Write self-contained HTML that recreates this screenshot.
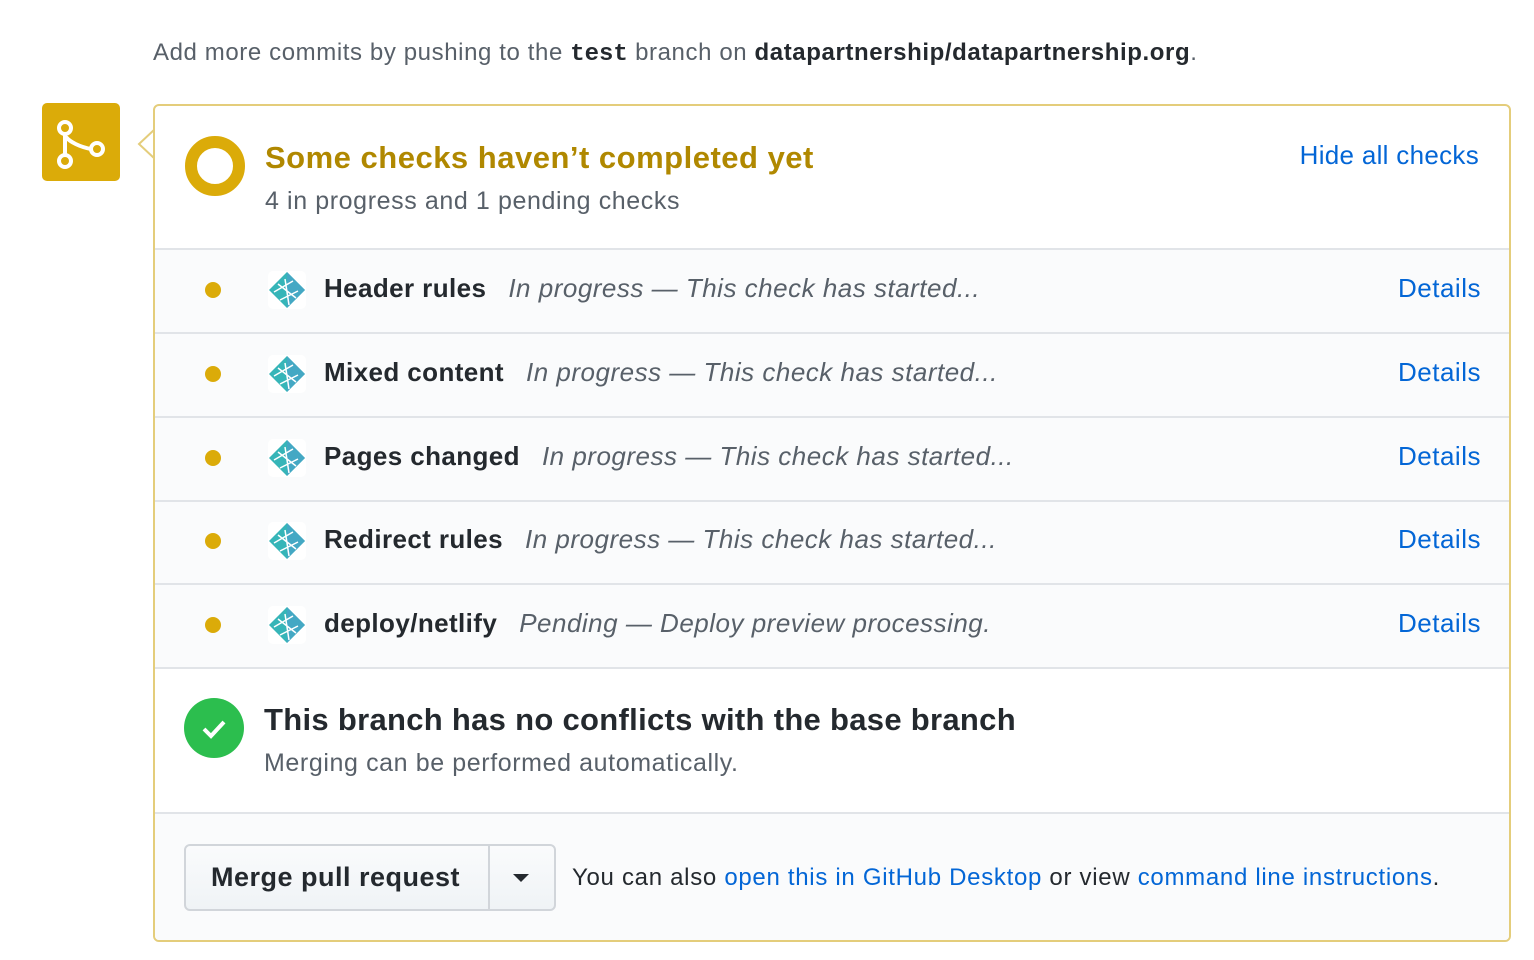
<!DOCTYPE html>
<html><head><meta charset="utf-8"><style>
*{margin:0;padding:0;box-sizing:border-box}
body{width:1534px;height:960px;background:#fff;font-family:"Liberation Sans",sans-serif;position:relative;overflow:hidden;color:#24292e}
.a{position:absolute;white-space:nowrap}
.box{position:absolute;left:153px;top:104px;width:1358px;height:838px;border:2px solid #e4cd7b;border-radius:6px;overflow:hidden;background:#fff}
.row{position:absolute;left:0;width:100%;background:#fafbfc;border-top:2px solid #e1e4e8}
.dot{position:absolute;left:52px;width:16px;height:16px;border-radius:50%;background:#dbab09}
.nl{position:absolute;left:114px}
.nm{position:absolute;left:171px;font-size:26px;font-weight:bold;color:#24292e;letter-spacing:0.4px}
.st{font-weight:normal;font-style:italic;color:#586069;margin-left:22px;letter-spacing:0.5px}
.det{position:absolute;right:30px;font-size:26px;color:#0366d6;letter-spacing:0.5px}
a{color:#0366d6;text-decoration:none}
</style></head><body>
<div class="a" style="left:153px;top:39px;font-size:24px;color:#586069;letter-spacing:0.6px">Add more commits by pushing to the <b style="font-family:'Liberation Mono',monospace;color:#24292e;letter-spacing:0">test</b> branch on <b style="color:#24292e">datapartnership/datapartnership.org</b>.</div>
<div class="a" style="left:42px;top:103px;width:78px;height:78px;background:#dbab09;border-radius:5px">
<svg width="78" height="78" viewBox="0 0 78 78"><g fill="none" stroke="#fff" stroke-width="4"><circle cx="23" cy="25" r="6"/><circle cx="23" cy="58" r="6"/><circle cx="55" cy="46" r="6"/><path d="M23 31v21M24 34c4 5 14 10 25 12"/></g></svg></div>
<svg class="a" style="left:136px;top:128px" width="20" height="32"><path d="M19 1L3 16L19 31" fill="#fff" stroke="#e4cd7b" stroke-width="2"/></svg>
<div class="box">
 <div class="a" style="left:30px;top:30px;width:60px;height:60px;border-radius:50%;border:12px solid #dbab09"></div>
 <div class="a" style="left:110px;top:34px;font-size:31px;font-weight:bold;color:#b08800;letter-spacing:0.5px">Some checks haven’t completed yet</div>
 <div class="a" style="left:110px;top:81px;font-size:25px;color:#586069;letter-spacing:0.6px">4 in progress and 1 pending checks</div>
 <div class="a" style="right:30px;top:34px;font-size:26px;color:#0366d6;letter-spacing:0.3px">Hide all checks</div>
 <div class="row" style="top:142px;height:86px"></div>
 <div class="row" style="top:226px;height:86px"></div>
 <div class="row" style="top:310px;height:86px"></div>
 <div class="row" style="top:394px;height:86px"></div>
 <div class="row" style="top:477px;height:86px"></div>
 <div class="row" style="top:561px;height:147px;background:#fff"></div>
 <div class="row" style="top:706px;height:140px"></div>
</div>
<div style="position:absolute;left:153px;top:104px;width:1358px">
 <div style="position:absolute;top:144px;width:100%;height:84px">
  <div class="dot" style="top:34px"></div><svg class="nl" style="top:22px" width="40" height="40" viewBox="0 0 40 40"><rect x="1" y="1" width="38" height="38" rx="5" fill="#fff"/><path d="M20 2L38 20L20 38L2 20Z" fill="#36b5b8"/><path d="M20 2L38 20L20 38Z" fill="#4aa3c9" opacity=".7"/><path d="M7 22L26 11M13 30L31 21M18 9L22 35M11 14L29 28" stroke="#fff" stroke-width="1.5"/></svg>
  <div class="nm" style="top:25px">Header rules<span class="st">In progress — This check has started...</span></div><div class="det" style="top:25px">Details</div></div>
 <div style="position:absolute;top:228px;width:100%;height:84px">
  <div class="dot" style="top:34px"></div><svg class="nl" style="top:22px" width="40" height="40" viewBox="0 0 40 40"><rect x="1" y="1" width="38" height="38" rx="5" fill="#fff"/><path d="M20 2L38 20L20 38L2 20Z" fill="#36b5b8"/><path d="M20 2L38 20L20 38Z" fill="#4aa3c9" opacity=".7"/><path d="M7 22L26 11M13 30L31 21M18 9L22 35M11 14L29 28" stroke="#fff" stroke-width="1.5"/></svg>
  <div class="nm" style="top:25px">Mixed content<span class="st">In progress — This check has started...</span></div><div class="det" style="top:25px">Details</div></div>
 <div style="position:absolute;top:312px;width:100%;height:84px">
  <div class="dot" style="top:34px"></div><svg class="nl" style="top:22px" width="40" height="40" viewBox="0 0 40 40"><rect x="1" y="1" width="38" height="38" rx="5" fill="#fff"/><path d="M20 2L38 20L20 38L2 20Z" fill="#36b5b8"/><path d="M20 2L38 20L20 38Z" fill="#4aa3c9" opacity=".7"/><path d="M7 22L26 11M13 30L31 21M18 9L22 35M11 14L29 28" stroke="#fff" stroke-width="1.5"/></svg>
  <div class="nm" style="top:25px">Pages changed<span class="st">In progress — This check has started...</span></div><div class="det" style="top:25px">Details</div></div>
 <div style="position:absolute;top:395px;width:100%;height:84px">
  <div class="dot" style="top:34px"></div><svg class="nl" style="top:22px" width="40" height="40" viewBox="0 0 40 40"><rect x="1" y="1" width="38" height="38" rx="5" fill="#fff"/><path d="M20 2L38 20L20 38L2 20Z" fill="#36b5b8"/><path d="M20 2L38 20L20 38Z" fill="#4aa3c9" opacity=".7"/><path d="M7 22L26 11M13 30L31 21M18 9L22 35M11 14L29 28" stroke="#fff" stroke-width="1.5"/></svg>
  <div class="nm" style="top:25px">Redirect rules<span class="st">In progress — This check has started...</span></div><div class="det" style="top:25px">Details</div></div>
 <div style="position:absolute;top:479px;width:100%;height:84px">
  <div class="dot" style="top:34px"></div><svg class="nl" style="top:22px" width="40" height="40" viewBox="0 0 40 40"><rect x="1" y="1" width="38" height="38" rx="5" fill="#fff"/><path d="M20 2L38 20L20 38L2 20Z" fill="#36b5b8"/><path d="M20 2L38 20L20 38Z" fill="#4aa3c9" opacity=".7"/><path d="M7 22L26 11M13 30L31 21M18 9L22 35M11 14L29 28" stroke="#fff" stroke-width="1.5"/></svg>
  <div class="nm" style="top:25px">deploy/netlify<span class="st">Pending — Deploy preview processing.</span></div><div class="det" style="top:25px">Details</div></div>
 <div class="a" style="left:31px;top:594px;width:60px;height:60px;border-radius:50%;background:#2cbe4e"><svg width="60" height="60"><path d="M20 31l7 7l13-14" fill="none" stroke="#fff" stroke-width="4"/></svg></div>
 <div class="a" style="left:111px;top:598px;font-size:31px;font-weight:bold;letter-spacing:0.3px">This branch has no conflicts with the base branch</div>
 <div class="a" style="left:111px;top:645px;font-size:25px;color:#586069;letter-spacing:0.6px">Merging can be performed automatically.</div>
 <div class="a" style="left:31px;top:740px;width:372px;height:67px;border:2px solid #d1d5da;border-radius:6px;background:linear-gradient(#fafbfc,#eff3f6)">
  <div class="a" style="left:25px;top:16px;font-size:27px;font-weight:bold;letter-spacing:0.5px">Merge pull request</div>
  <div class="a" style="left:302px;top:0;height:63px;border-left:2px solid #d1d5da;width:2px"></div>
  <svg class="a" style="left:327px;top:28px" width="16" height="10"><path d="M0 0h16L8 8z" fill="#24292e"/></svg>
 </div>
 <div class="a" style="left:419px;top:760px;font-size:24px;letter-spacing:0.7px">You can also <a>open this in GitHub Desktop</a> or view <a>command line instructions</a>.</div>
</div>
</body></html>
